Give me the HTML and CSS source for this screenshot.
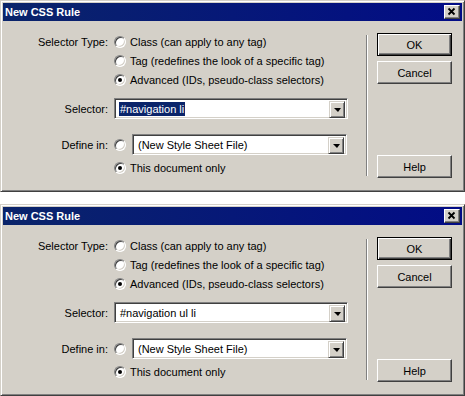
FILE: index.html
```html
<html>
  <head>
    <title>New CSS Rule</title>
    <link rel="stylesheet" href="styles.css">
  </head>
  <body>

    <div class="dialog">
      <div class="titlebar">
        <span class="title">New CSS Rule</span>
        <span class="close">
          <svg width="14" height="12" viewBox="0 0 14 12"><path d="M3.5 2.5 L9.5 8.5 M9.5 2.5 L3.5 8.5" stroke="#000" stroke-width="1.8" fill="none"/></svg>
        </span>
      </div>
      <div class="content">
        <div class="form">
          <div class="row">
            <span class="label">Selector Type:</span>
            <span class="radio"></span><span>Class (can apply to any tag)</span>
          </div>
          <div class="row">
            <span class="label"></span>
            <span class="radio"></span><span>Tag (redefines the look of a specific tag)</span>
          </div>
          <div class="row">
            <span class="label"></span>
            <span class="radio on"></span><span>Advanced (IDs, pseudo-class selectors)</span>
          </div>
          <div class="row sel-row">
            <span class="label">Selector:</span>
            <span class="combo wide"><span class="value"><span class="hilite">#navigation li</span></span><span class="drop"></span></span>
          </div>
          <div class="row def-row">
            <span class="label">Define in:</span>
            <span class="radio gap"></span>
            <span class="combo narrow"><span class="value">(New Style Sheet File)</span><span class="drop"></span></span>
          </div>
          <div class="row last">
            <span class="label"></span>
            <span class="radio on"></span><span>This document only</span>
          </div>
        </div>
        <div class="divider"></div>
        <div class="buttons">
          <span class="btn default">OK</span>
          <span class="btn cancel">Cancel</span>
          <span class="btn help">Help</span>
        </div>
      </div>
    </div>

    <div class="dialog">
      <div class="titlebar">
        <span class="title">New CSS Rule</span>
        <span class="close">
          <svg width="14" height="12" viewBox="0 0 14 12"><path d="M3.5 2.5 L9.5 8.5 M9.5 2.5 L3.5 8.5" stroke="#000" stroke-width="1.8" fill="none"/></svg>
        </span>
      </div>
      <div class="content">
        <div class="form">
          <div class="row">
            <span class="label">Selector Type:</span>
            <span class="radio"></span><span>Class (can apply to any tag)</span>
          </div>
          <div class="row">
            <span class="label"></span>
            <span class="radio"></span><span>Tag (redefines the look of a specific tag)</span>
          </div>
          <div class="row">
            <span class="label"></span>
            <span class="radio on"></span><span>Advanced (IDs, pseudo-class selectors)</span>
          </div>
          <div class="row sel-row">
            <span class="label">Selector:</span>
            <span class="combo wide"><span class="value"><span class="plain">#navigation ul li</span></span><span class="drop"></span></span>
          </div>
          <div class="row def-row">
            <span class="label">Define in:</span>
            <span class="radio gap"></span>
            <span class="combo narrow"><span class="value">(New Style Sheet File)</span><span class="drop"></span></span>
          </div>
          <div class="row last">
            <span class="label"></span>
            <span class="radio on"></span><span>This document only</span>
          </div>
        </div>
        <div class="divider"></div>
        <div class="buttons">
          <span class="btn default">OK</span>
          <span class="btn cancel">Cancel</span>
          <span class="btn help">Help</span>
        </div>
      </div>
    </div>

  </body>
</html>
```

FILE: styles.css
```css
body { margin: 0; background-color: #FFFFFF; color: #000000;
       font-family: "Liberation Sans", Arial, sans-serif; font-size: 11px; }

/* window frame */
.dialog { width: 465px; height: 192px; box-sizing: border-box;
          display: flex; flex-direction: column;
          background-color: #D4D0C8; padding: 2px;
          border: 1px solid; border-color: #D4D0C8 #404040 #404040 #D4D0C8;
          box-shadow: inset 1px 1px #FFFFFF, inset -1px -1px #808080; }
.dialog + .dialog { margin-top: 12px; }

.titlebar { height: 18px; padding: 0 2px; flex: none;
            display: flex; align-items: center; justify-content: space-between;
            background: linear-gradient(to right, #0A246A, #020C86); }
.title    { color: #FFFFFF; font-weight: bold; }
.close    { width: 16px; height: 14px; box-sizing: border-box;
            display: flex; align-items: center; justify-content: center;
            background-color: #D4D0C8;
            border: 1px solid; border-color: #FFFFFF #404040 #404040 #FFFFFF;
            box-shadow: inset -1px -1px #808080; }

.content { flex: 1; display: flex; }

/* left side */
.form  { width: 363px; padding-top: 11px; }
.row   { display: flex; align-items: center; height: 19px; }
.label { width: 105px; margin-right: 6px; text-align: right; flex: none; }
.sel-row { height: 21px; margin-top: 9px; }
.def-row { height: 21px; margin-top: 15px; }
.last    { margin-top: 3px; }

.radio { width: 12px; height: 12px; box-sizing: border-box; flex: none;
         margin-right: 4px; border-radius: 50%; background-color: #FFFFFF;
         border: 1px solid; border-color: #808080 #FFFFFF #FFFFFF #808080;
         box-shadow: inset 1px 1px #404040, inset -1px -1px #D4D0C8;
         display: flex; align-items: center; justify-content: center; }
.radio.gap { margin-right: 6px; }
.radio.on::after { content: ""; width: 4px; height: 4px; border-radius: 50%;
                   background-color: #000000; }

.combo { height: 21px; box-sizing: border-box; display: flex;
         background-color: #FFFFFF;
         border: 1px solid; border-color: #808080 #FFFFFF #FFFFFF #808080;
         box-shadow: inset 1px 1px #404040, inset -1px -1px #D4D0C8;
         padding: 2px 2px 2px 4px; }
.combo.wide   { width: 234px; }
.combo.narrow { width: 215px; padding-left: 5px; }
.value  { flex: 1; display: flex; align-items: center; }
.hilite { background-color: #0A246A; color: #FFFFFF; padding: 1px 1px; }
.plain  { padding: 1px 1px; }
.drop   { width: 16px; height: 17px; box-sizing: border-box; flex: none;
          background-color: #D4D0C8;
          border: 1px solid; border-color: #D4D0C8 #404040 #404040 #D4D0C8;
          box-shadow: inset 1px 1px #FFFFFF, inset -1px -1px #808080;
          display: flex; align-items: center; justify-content: center; }
.drop::after { content: ""; width: 0; height: 0; margin-top: 1px;
               border-left: 4px solid transparent; border-right: 3px solid transparent;
               border-top: 4px solid #000000; }

.divider { width: 0; height: 141px; margin-top: 14px;
           border-left: 1px solid #808080; border-right: 1px solid #FFFFFF; }

/* right side */
.buttons { margin-left: 9px; padding-top: 12px; display: flex; flex-direction: column; }
.btn     { width: 75px; height: 23px; box-sizing: border-box;
           display: flex; align-items: center; justify-content: center;
           border: 1px solid; border-color: #FFFFFF #404040 #404040 #FFFFFF;
           box-shadow: inset -1px -1px #808080; }
.btn.default { border-color: #000000;
               box-shadow: inset 1px 1px #FFFFFF, inset -1px -1px #404040, inset -2px -2px #808080; }
.btn.cancel  { margin-top: 5px; }
.btn.help    { margin-top: 71px; }
```
